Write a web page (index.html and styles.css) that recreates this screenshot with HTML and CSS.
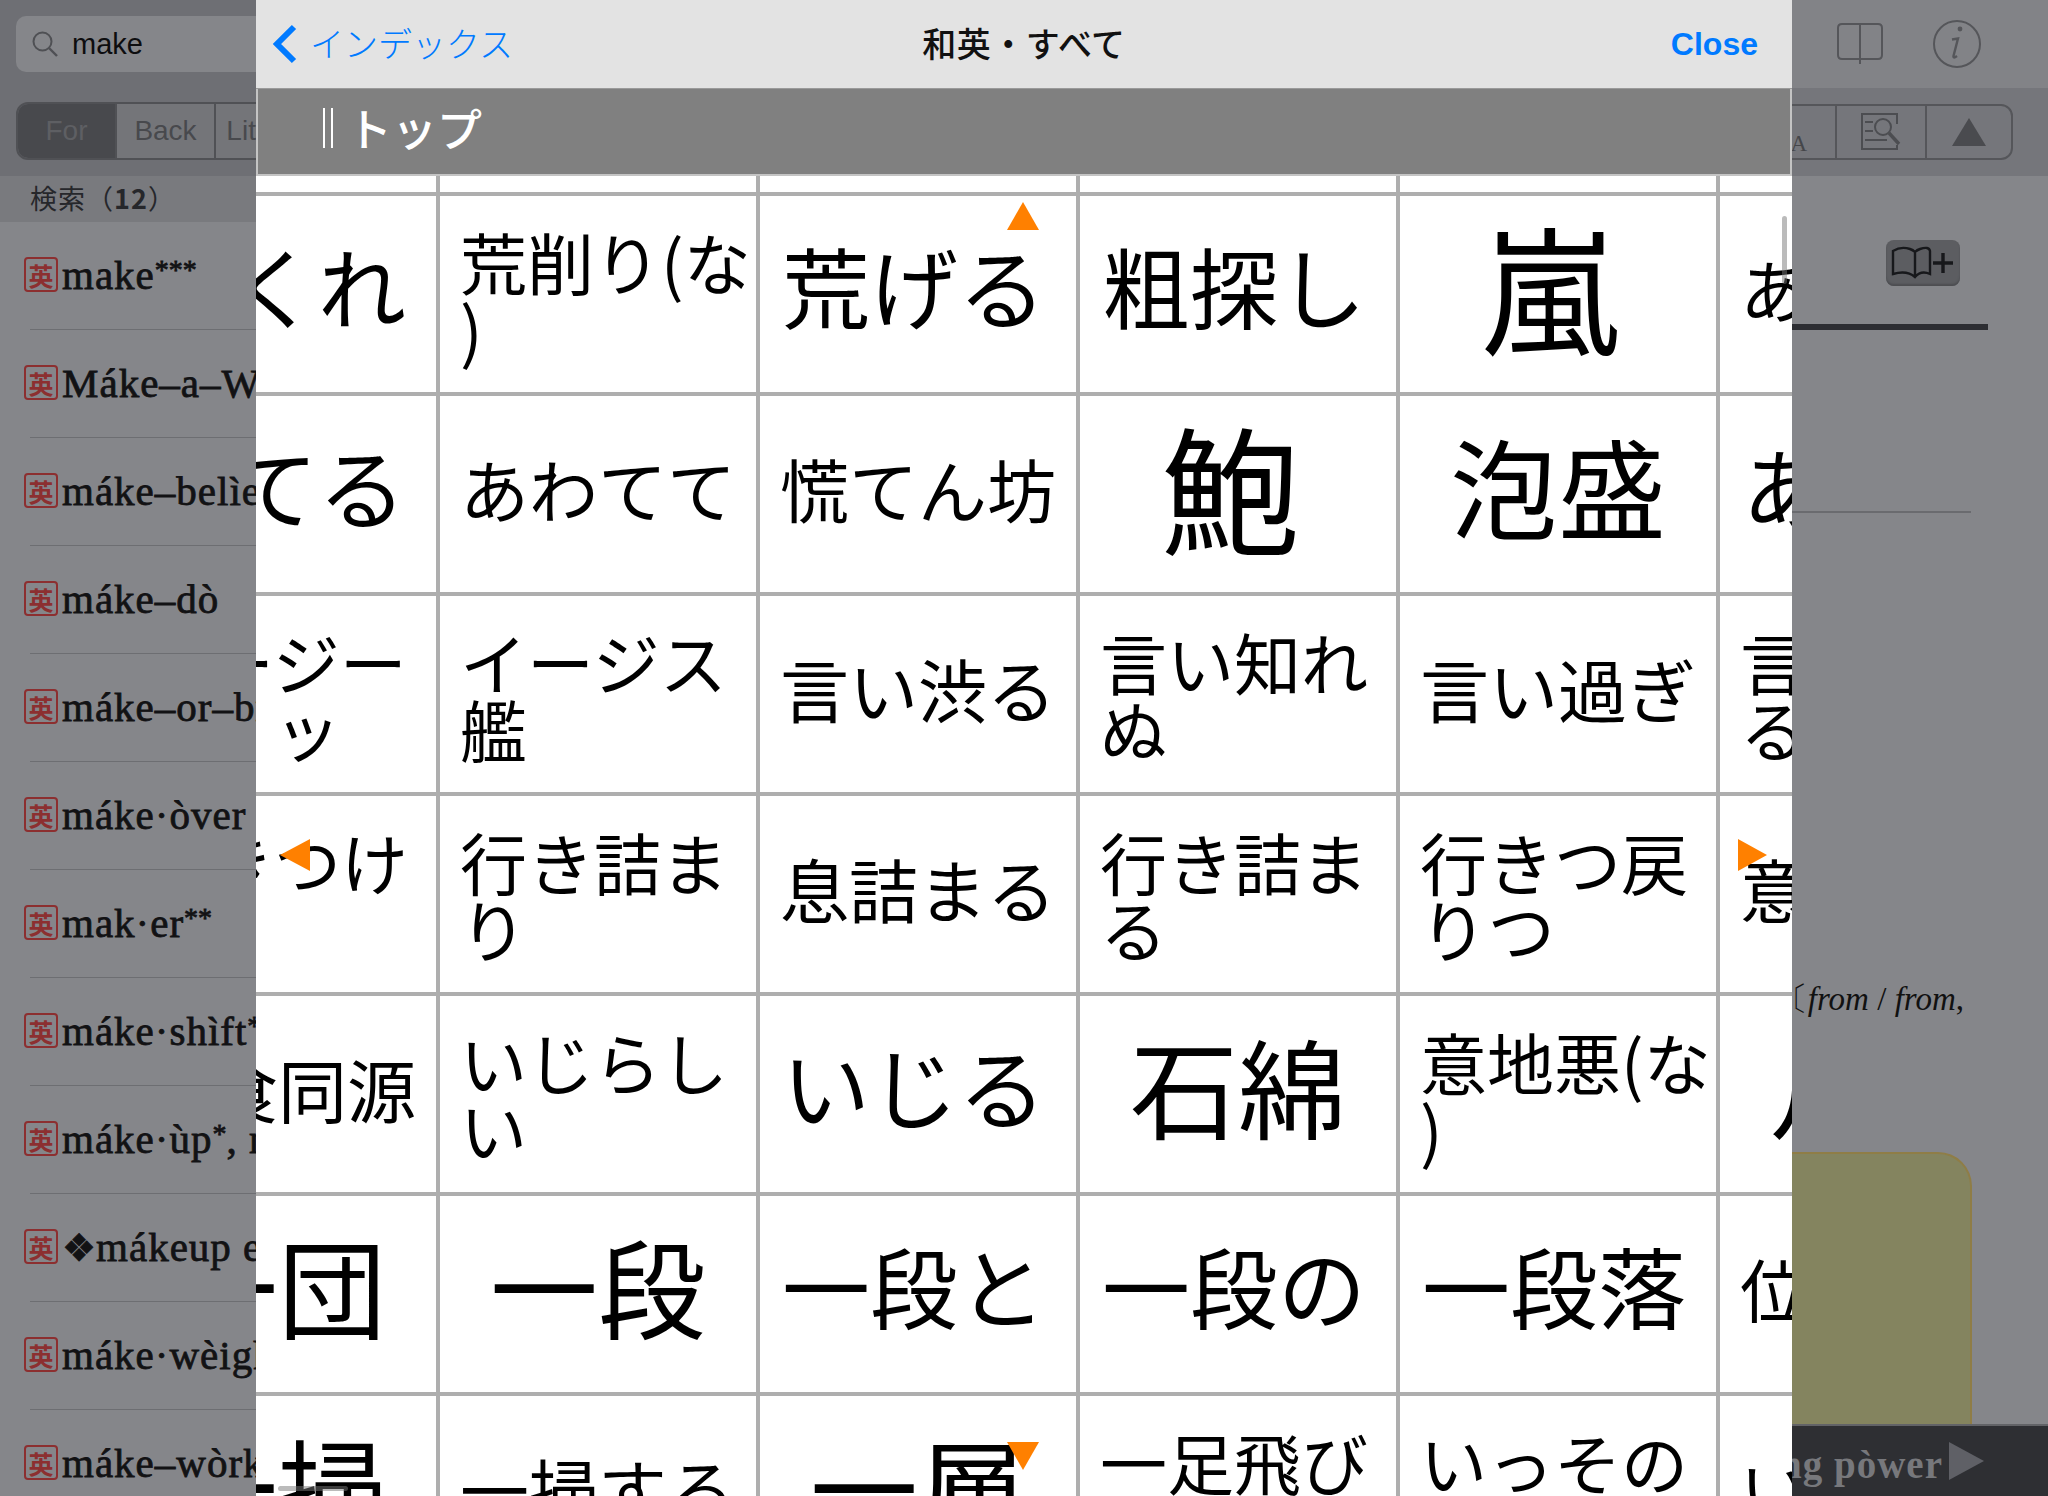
FILE: index.html
```html
<!DOCTYPE html>
<html lang="ja">
<head>
    <meta charset="UTF-8">
    <title>和英・すべて</title>
    <link rel="stylesheet" href="styles.css">
</head>
<body>

<div class="app">
    <!-- Left: search results -->
    <aside class="sidebar">
        <div class="side-top">
            <div class="search-field">
                <svg class="search-icon" width="26" height="26" viewBox="0 0 26 26"><circle cx="10.5" cy="10.5" r="9" fill="none" stroke="#4f5054" stroke-width="2"/><path d="M17 17l8 8" stroke="#4f5054" stroke-width="2.4"/></svg>
                <span>make</span>
            </div>
            <div class="segments">
                <div class="seg seg-on">For</div>
                <div class="seg">Back</div>
                <div class="seg">Literal</div>
            </div>
        </div>
        <div class="section-head">検索（<b>12</b>）</div>
        <ul class="results">
            <li><span class="badge">英</span><span>make<span class="star">***</span></span></li>
            <li><span class="badge">英</span><span>Máke–a–Wish</span></li>
            <li><span class="badge">英</span><span>máke–belìeve</span></li>
            <li><span class="badge">英</span><span>máke–dò</span></li>
            <li><span class="badge">英</span><span>máke–or–bréak</span></li>
            <li><span class="badge">英</span><span>máke·òver</span></li>
            <li><span class="badge">英</span><span>mak·er<span class="star">**</span>&nbsp;&nbsp;&nbsp;&nbsp;&nbsp;&nbsp;)</span></li>
            <li><span class="badge">英</span><span>máke·shìft<span class="star">*</span></span></li>
            <li><span class="badge">英</span><span>máke·ùp<span class="star">*</span>, make</span></li>
            <li><span class="badge">英</span><span><span class="diamond">❖</span>mákeup e</span></li>
            <li><span class="badge">英</span><span>máke·wèight</span></li>
            <li><span class="badge">英</span><span>máke–wòrk</span></li>
        </ul>
    </aside>

    <!-- Right: entry view, mostly behind the index sheet -->
    <main class="entry">
        <div class="entry-top">
            <svg class="icon-book" width="46" height="44" viewBox="0 0 46 44"><path d="M23 3H5Q1 3 1 7V34Q1 38 5 38H23M23 3H41Q45 3 45 7V34Q45 38 41 38H23M23 3V43" fill="none" stroke="#55565a" stroke-width="2"/></svg>
            <svg width="48" height="48" viewBox="0 0 48 48"><circle cx="24" cy="24" r="23" fill="none" stroke="#55565a" stroke-width="2"/><circle cx="27" cy="9" r="2.4" fill="#55565a"/><path d="M19 19.5L25 18.5L20.5 36Q20 39 24 36" fill="none" stroke="#55565a" stroke-width="2.4"/></svg>
        </div>
        <div class="entry-tools">
            <div class="tool-group">
                <div class="tool tool-font">A</div>
                <div class="tool">
                    <svg width="40" height="38" viewBox="0 0 40 38"><path d="M36 11V1H1V36H36V32" fill="none" stroke="#4c4d51" stroke-width="2"/><path d="M4 9H12M4 18H12M4 27H26" stroke="#4c4d51" stroke-width="2"/><circle cx="22" cy="14" r="8" fill="none" stroke="#4c4d51" stroke-width="2"/><path d="M28 20L38 31" stroke="#4c4d51" stroke-width="3.4"/></svg>
                </div>
                <div class="tool tool-last">
                    <div class="tri-up"></div>
                </div>
            </div>
        </div>
        <div class="entry-body">
            <div class="book-plus">
                <svg width="64" height="34" viewBox="0 0 64 34"><path d="M2 28V5Q10 0 19 3Q22 4 24 6Q26 4 29 3Q38 0 39 5V28Q30 24 24 31Q16 24 2 28ZM24 6V31" fill="none" stroke="#17181b" stroke-width="2.4"/><path d="M42 17H62M52 7V27" stroke="#17181b" stroke-width="3.4"/></svg>
            </div>
            <div class="rule-thick"></div>
            <div class="rule-thin"></div>
            <div class="from-line">〔<i>from</i> / <i>from</i>,</div>
            <div class="note-box"></div>
        </div>
        <div class="entry-bottom">
            <span class="next-word">making pòwer</span>
            <div class="tri-right"></div>
        </div>
    </main>
</div>

<!-- Index sheet over everything -->
<section class="sheet">
    <header class="sheet-nav">
        <a class="nav-back">
            <svg width="26" height="40" viewBox="0 0 26 40"><path d="M22 3L5 20L22 37" fill="none" stroke="#007aff" stroke-width="6"/></svg>
            <span class="nav-label">インデックス</span>
        </a>
        <div class="nav-title">和英・すべて</div>
        <a class="nav-close">Close</a>
    </header>
    <div class="sheet-title"><span class="bars"></span>トップ</div>
    <div class="grid-view">
        <div class="word-grid">
            <div class="cell"></div><div class="cell"></div><div class="cell"></div><div class="cell"></div><div class="cell"></div><div class="cell"></div>

            <div class="cell m">荒くれ</div>
            <div class="cell s left">荒削り(な<br>)</div>
            <div class="cell m">荒げる</div>
            <div class="cell m">粗探し</div>
            <div class="cell xl">嵐</div>
            <div class="cell s">あらしの</div>

            <div class="cell m">慌てる</div>
            <div class="cell s">あわてて</div>
            <div class="cell s">慌てん坊</div>
            <div class="cell xl">鮑</div>
            <div class="cell l">泡盛</div>
            <div class="cell m">あわや</div>

            <div class="cell s left">イージー<br>　　ッ</div>
            <div class="cell s left">イージス<br>艦</div>
            <div class="cell s">言い渋る</div>
            <div class="cell s left">言い知れ<br>ぬ</div>
            <div class="cell s">言い過ぎ</div>
            <div class="cell s left">言い過ぎ<br>る</div>

            <div class="cell s left">行きつけ<br>の</div>
            <div class="cell s left">行き詰ま<br>り</div>
            <div class="cell s">息詰まる</div>
            <div class="cell s left">行き詰ま<br>る</div>
            <div class="cell s left">行きつ戻<br>りつ</div>
            <div class="cell s">意気込む</div>

            <div class="cell s">医食同源</div>
            <div class="cell s left">いじらし<br>い</div>
            <div class="cell m">いじる</div>
            <div class="cell l">石綿</div>
            <div class="cell s left">意地悪(な<br>)</div>
            <div class="cell l">月日</div>

            <div class="cell l">一団</div>
            <div class="cell l">一段</div>
            <div class="cell m">一段と</div>
            <div class="cell m">一段の</div>
            <div class="cell m">一段落</div>
            <div class="cell s">位置する</div>

            <div class="cell l">一掃</div>
            <div class="cell s">一掃する</div>
            <div class="cell l">一層</div>
            <div class="cell s left">一足飛び<br>に</div>
            <div class="cell s left">いっその<br>こと</div>
            <div class="cell s">いっそう</div>
        </div>

        <div class="arrow arrow-up"></div>
        <div class="arrow arrow-down"></div>
        <div class="arrow arrow-left"></div>
        <div class="arrow arrow-right"></div>
        <div class="scroll-v"></div>
        <div class="scroll-h"></div>
    </div>
</section>

</body>
</html>
```

FILE: styles.css
```css
* {
    box-sizing: border-box;
}

html, body {
    margin: 0;
    padding: 0;
    height: 100%;
    overflow: hidden;
}

body {
    position: relative;
    width: 2048px;
    height: 1496px;
    background-color: #85868a;
    font-family: 'Noto Sans CJK JP', sans-serif;
    color: #000;
}

.app {
    display: flex;
    height: 100%;
}

/* Sidebar */
.sidebar {
    width: 640px;
    flex: none;
    background-color: #85868a;
    overflow: hidden;
}

.side-top {
    height: 176px;
    padding: 16px 0 0 16px;
    background-color: #6e6f74;
}

.search-field {
    display: flex;
    align-items: center;
    height: 56px;
    width: 560px;
    padding-left: 16px;
    background-color: #85868a;
    border-radius: 10px;
    font-family: 'Liberation Sans', sans-serif;
    font-size: 29px;
    color: #0d0d0f;
}

.search-icon {
    margin-right: 14px;
}

.segments {
    display: flex;
    width: 560px;
    height: 58px;
    margin-top: 30px;
    border: 2px solid #505155;
    border-radius: 12px;
    overflow: hidden;
    font-family: 'Liberation Sans', sans-serif;
    font-size: 28px;
    color: #48494d;
}

.seg {
    width: 99px;
    display: flex;
    align-items: center;
    justify-content: center;
    background-color: #747579;
    border-right: 2px solid #505155;
    white-space: nowrap;
}

.seg-on {
    background-color: #48494d;
    color: #5e5f63;
}

.section-head {
    height: 46px;
    padding-left: 30px;
    background-color: #797a7e;
    font-size: 27px;
    line-height: 44px;
    letter-spacing: 1px;
    color: #26272b;
}

.results {
    list-style: none;
    margin: 0;
    padding: 0;
}

.results li {
    position: relative;
    display: flex;
    align-items: center;
    height: 108px;
    padding: 0 0 3px 24px;
    font-family: 'Liberation Serif', serif;
    font-size: 41px;
    letter-spacing: 1px;
    -webkit-text-stroke: 0.8px #121214;
    color: #121214;
    white-space: nowrap;
}

.results li::after {
    content: "";
    position: absolute;
    left: 30px;
    right: 0;
    bottom: 0;
    height: 1px;
    background-color: #6d6e72;
}

.star {
    font-size: 28px;
    letter-spacing: 0;
    vertical-align: 10px;
}

.badge {
    width: 34px;
    height: 35px;
    margin-right: 4px;
    flex: none;
    display: flex;
    align-items: center;
    justify-content: center;
    border: 2px solid #8c2f30;
    border-radius: 4px;
    font-family: 'Noto Sans CJK JP', sans-serif;
    font-size: 25px;
    font-weight: 700;
    color: #8c2f30;
    letter-spacing: 0;
    -webkit-text-stroke: 0;
}

.diamond {
    font-family: 'DejaVu Sans', sans-serif;
    font-size: 38px;
    letter-spacing: 0;
}

/* Entry view */
.entry {
    flex: 1;
    display: flex;
    flex-direction: column;
    min-width: 0;
}

.entry-top {
    display: flex;
    justify-content: flex-end;
    align-items: center;
    gap: 50px;
    height: 88px;
    padding-right: 67px;
    background-color: #828387;
}

.icon-book {
    margin-top: -3px;
}

.entry-tools {
    display: flex;
    justify-content: flex-end;
    height: 88px;
    padding: 16px 35px 0 0;
    background-color: #75767b;
}

.tool-group {
    display: flex;
    height: 56px;
    border: 2px solid #55565a;
    border-radius: 0 12px 12px 0;
}

.tool {
    width: 90px;
    display: flex;
    align-items: center;
    justify-content: center;
    border-left: 2px solid #55565a;
}

.tool-last {
    width: 86px;
}

.tool-font {
    justify-content: flex-end;
    align-items: flex-end;
    padding: 0 28px 1px 0;
    font-family: 'Liberation Serif', serif;
    font-size: 23px;
    color: #45464a;
}

.tri-up {
    width: 0;
    height: 0;
    border-left: 17px solid transparent;
    border-right: 17px solid transparent;
    border-bottom: 28px solid #4a4b4f;
}

.entry-body {
    flex: 1;
    display: flex;
    flex-direction: column;
    align-items: flex-end;
    background-color: #85868a;
    min-height: 0;
}

.book-plus {
    width: 74px;
    height: 46px;
    margin: 64px 88px 0 0;
    display: flex;
    align-items: center;
    justify-content: center;
    background-color: #5c5d61;
    border-radius: 8px;
    box-shadow: inset 0 -2px 2px #4c4d51;
}

.rule-thick {
    width: 300px;
    height: 6px;
    margin: 38px 60px 0 0;
    background-color: #2d2e33;
}

.rule-thin {
    width: 300px;
    height: 2px;
    margin: 181px 77px 0 0;
    background-color: #6a6b6f;
}

.from-line {
    margin: 466px 84px 0 0;
    font-family: 'Liberation Serif', serif;
    font-size: 33px;
    line-height: 40px;
    color: #111;
    white-space: nowrap;
}

.note-box {
    width: 400px;
    flex: 1;
    margin: 133px 76px 0 0;
    background-color: #84845f;
    border: 2px solid #8f7d46;
    border-bottom: 0;
    border-radius: 0 34px 0 0;
}

.entry-bottom {
    display: flex;
    justify-content: flex-end;
    align-items: center;
    height: 72px;
    padding-right: 64px;
    background-color: #2e2f33;
    border-top: 2px solid #626367;
    font-family: 'Liberation Serif', serif;
    font-size: 39px;
    font-weight: 700;
    letter-spacing: 1px;
    color: #77787c;
}

.next-word {
    padding-top: 6px;
    white-space: nowrap;
}

.tri-right {
    width: 0;
    height: 0;
    margin-left: 6px;
    border-top: 19px solid transparent;
    border-bottom: 19px solid transparent;
    border-left: 35px solid #5f6066;
}

/* Index sheet */
.sheet {
    position: absolute;
    left: 256px;
    top: 0;
    width: 1536px;
    height: 1496px;
    display: flex;
    flex-direction: column;
    background-color: #fff;
}

.sheet-nav {
    display: grid;
    grid-template-columns: 1fr auto 1fr;
    align-items: center;
    height: 89px;
    padding: 0 34px;
    background-color: #e3e3e3;
    border-bottom: 1px solid #9a9a9a;
}

.nav-back {
    display: flex;
    align-items: center;
    gap: 12px;
    margin-left: -18px;
    font-size: 34px;
    font-weight: 300;
    color: #007aff;
}

.nav-label {
    padding-bottom: 4px;
}

.nav-title {
    padding-bottom: 4px;
    font-size: 34px;
    font-weight: 500;
    letter-spacing: 0.5px;
    color: #111;
}

.nav-close {
    justify-self: end;
    font-family: 'Liberation Sans', sans-serif;
    font-size: 32px;
    font-weight: 700;
    color: #007aff;
}

.sheet-title {
    display: flex;
    align-items: center;
    height: 87px;
    padding: 0 0 8px 65px;
    background-color: #808080;
    border: 2px solid #c4c4c4;
    border-top: 0;
    font-size: 45px;
    font-weight: 500;
    color: #fff;
}

.bars {
    width: 10px;
    height: 40px;
    margin-right: 14px;
    border-left: 2px solid #fff;
    border-right: 2px solid #fff;
}

.grid-view {
    position: relative;
    flex: 1;
    min-height: 0;
    overflow: hidden;
}

.word-grid {
    display: grid;
    grid-template-columns: repeat(6, 316px);
    grid-auto-rows: 196px;
    gap: 4px;
    width: max-content;
    margin: -180px 0 0 -136px;
    background-color: #aeaeae;
}

.cell {
    display: flex;
    align-items: center;
    justify-content: center;
    background-color: #fff;
    line-height: 1;
    white-space: nowrap;
    overflow: hidden;
}

.cell.s {
    padding-bottom: 12px;
    font-size: 69px;
}

.cell.m {
    padding: 0 8px 20px 0;
    font-size: 88px;
}

.cell.l {
    padding-bottom: 20px;
    font-size: 108px;
}

.cell.xl {
    padding: 0 16px 20px 0;
    font-size: 138px;
}

/* wrapped words sit at the left and use the smallest size */
.cell.left {
    justify-content: flex-start;
    padding: 0 0 0 20px;
    font-size: 67px;
}

.arrow {
    position: absolute;
    width: 0;
    height: 0;
}

.arrow-up {
    left: 751px;
    top: 26px;
    border-left: 16px solid transparent;
    border-right: 16px solid transparent;
    border-bottom: 28px solid #ff8000;
}

.arrow-down {
    left: 751px;
    top: 1266px;
    border-left: 16px solid transparent;
    border-right: 16px solid transparent;
    border-top: 28px solid #ff8000;
}

.arrow-left {
    left: 24px;
    top: 663px;
    border-top: 16px solid transparent;
    border-bottom: 16px solid transparent;
    border-right: 30px solid #ff8000;
}

.arrow-right {
    left: 1482px;
    top: 663px;
    border-top: 16px solid transparent;
    border-bottom: 16px solid transparent;
    border-left: 29px solid #ff8000;
}

.scroll-v {
    position: absolute;
    left: 1526px;
    top: 40px;
    width: 5px;
    height: 68px;
    border-radius: 3px;
    background-color: rgba(120, 120, 120, 0.5);
}

.scroll-h {
    position: absolute;
    left: 22px;
    top: 1310px;
    width: 70px;
    height: 5px;
    border-radius: 3px;
    background-color: rgba(120, 120, 120, 0.5);
}
```
